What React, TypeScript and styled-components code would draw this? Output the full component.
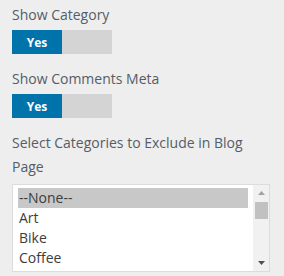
import React, { useRef, useState } from 'react';
import styled, { createGlobalStyle } from 'styled-components';

const GlobalStyle = createGlobalStyle`
  body {
    margin: 0;
    background: #eeeeee;
    font-family: 'Open Sans', 'Noto Sans', sans-serif;
  }
`;

const Panel = styled.div`
  padding: 3px 13px 0 12px;
  width: 259px;
`;

const Field = styled.div`
  margin-bottom: 13px;
`;

const Label = styled.div`
  font-size: 14px;
  line-height: 24px;
  color: #555d66;
  margin-bottom: 3px;
`;

const Toggle = styled.div`
  display: flex;
  width: 100px;
  height: 24px;
  cursor: pointer;
`;

const ToggleHalf = styled.span<{ $on: boolean }>`
  flex: 1;
  display: flex;
  align-items: center;
  justify-content: center;
  font-size: 12px;
  font-weight: 700;
  color: #fff;
  background: ${(p) => (p.$on ? '#0073aa' : '#d4d4d4')};
`;

const ListFrame = styled.div`
  display: flex;
  width: 258px;
  height: 88px;
  margin-top: 5px;
  box-sizing: border-box;
  border: 1px solid #dcdcdc;
  background: #fff;
`;

const Options = styled.div`
  flex: 1;
  padding: 3px 5px 3px 5px;
  overflow-y: scroll;
  scrollbar-width: none;
  &::-webkit-scrollbar {
    display: none;
  }
`;

const Option = styled.div<{ $selected: boolean }>`
  height: 20px;
  line-height: 20px;
  padding: 0 1px;
  font-size: 14px;
  color: #3c3c3c;
  cursor: default;
  white-space: nowrap;
  background: ${(p) => (p.$selected ? '#c8c8c8' : 'transparent')};
`;

const ScrollBar = styled.div`
  width: 16px;
  display: flex;
  flex-direction: column;
  background: #f1f1f1;
`;

const ScrollButton = styled.div`
  height: 16px;
  display: flex;
  align-items: center;
  justify-content: center;
  flex: none;
`;

const Track = styled.div`
  flex: 1;
  position: relative;
`;

const Thumb = styled.div`
  position: absolute;
  left: 2px;
  right: 1px;
  background: #c1c1c1;
`;

function Arrow ({ up, color }: { up: boolean; color: string }) {
  return (
    <svg width='7' height='4' viewBox='0 0 7 4'>
      <path d={up ? 'M3.5 0L7 4H0Z' : 'M0 0H7L3.5 4Z'} fill={color} />
    </svg>
  );
}

function Switch ({ value, onChange }: { value: boolean; onChange: (v: boolean) => void }) {
  return (
    <Toggle onClick={() => onChange(!value)}>
      <ToggleHalf $on={value}>{value ? 'Yes' : ''}</ToggleHalf>
      <ToggleHalf $on={!value}>{value ? '' : 'No'}</ToggleHalf>
    </Toggle>
  );
}

const categories = [
  '--None--', 'Art', 'Bike', 'Coffee', 'Design', 'Fashion', 'Food',
  'Lifestyle', 'Music', 'Nature', 'Photography', 'Sports', 'Travel',
];

const ROW = 20;
const VISIBLE = 86;
const TRACK = 54;

function CategoryList ({ value, onChange }: { value: string[]; onChange: (v: string[]) => void }) {
  const listRef = useRef<HTMLDivElement>(null);
  const [scroll, setScroll] = useState(0);
  const total = categories.length * ROW + 6;
  const thumbH = Math.max(10, Math.round((TRACK * VISIBLE) / total));
  const maxScroll = total - VISIBLE;
  const thumbTop = 1 + Math.round(((TRACK - thumbH - 1) * scroll) / maxScroll);

  const step = (dir: number) => listRef.current?.scrollBy({ top: dir * ROW });

  return (
    <ListFrame role='listbox' aria-multiselectable>
      <Options ref={listRef} onScroll={(e) => setScroll(e.currentTarget.scrollTop)}>
        {categories.map((c) => (
          <Option
            key={c}
            role='option'
            aria-selected={value.includes(c)}
            $selected={value.includes(c)}
            onClick={(e) =>
              onChange(e.ctrlKey || e.metaKey
                ? (value.includes(c) ? value.filter((v) => v !== c) : [...value, c])
                : [c])
            }
          >
            {c}
          </Option>
        ))}
      </Options>
      <ScrollBar>
        <ScrollButton onClick={() => step(-1)}>
          <Arrow up color={scroll > 0 ? '#505050' : '#a3a3a3'} />
        </ScrollButton>
        <Track>
          <Thumb style={{ top: thumbTop, height: thumbH }} />
        </Track>
        <ScrollButton onClick={() => step(1)}>
          <Arrow up={false} color={scroll < maxScroll ? '#505050' : '#a3a3a3'} />
        </ScrollButton>
      </ScrollBar>
    </ListFrame>
  );
}

export default function App () {
  const [showCategory, setShowCategory] = useState(true);
  const [showComments, setShowComments] = useState(true);
  const [excluded, setExcluded] = useState<string[]>(['--None--']);

  return (
    <Panel>
      <GlobalStyle />
      <Field>
        <Label>Show Category</Label>
        <Switch value={showCategory} onChange={setShowCategory} />
      </Field>
      <Field>
        <Label>Show Comments Meta</Label>
        <Switch value={showComments} onChange={setShowComments} />
      </Field>
      <Field>
        <Label>Select Categories to Exclude in Blog Page</Label>
        <CategoryList value={excluded} onChange={setExcluded} />
      </Field>
    </Panel>
  );
}
